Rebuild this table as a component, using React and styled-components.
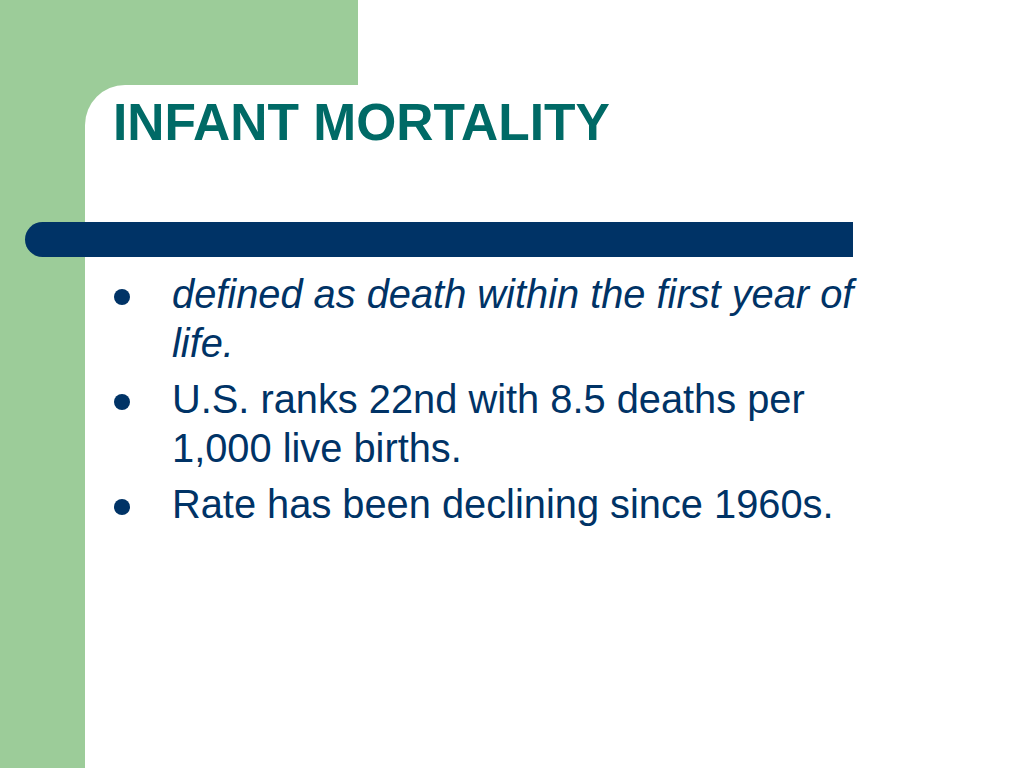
import React from 'react';
import styled, { createGlobalStyle } from 'styled-components';

const GlobalStyle = createGlobalStyle`
  html, body {
    margin: 0;
    padding: 0;
    background: #ffffff;
  }
  body {
    font-family: "Liberation Sans", Arial, sans-serif;
  }
`;

const GREEN = '#9ccc99';
const NAVY = '#003366';
const TEAL = '#006a66';

const Slide = styled.div`
  width: 1024px;
  height: 768px;
  display: flex;
  flex-direction: column;
  overflow: hidden;
  background: #ffffff;
`;

const Header = styled.div`
  height: 85px;
  flex: none;
  display: flex;
`;

const TopBlock = styled.div`
  width: 358px;
  background: ${GREEN};
`;

const Body = styled.div`
  flex: 1;
  display: flex;
  background: ${GREEN};
`;

const Sidebar = styled.div`
  width: 85px;
  flex: none;
`;

const Panel = styled.div`
  flex: 1;
  background: #ffffff;
  border-top-left-radius: 40px;
  padding: 12px 0 0 26px;
  display: flex;
  flex-direction: column;
`;

const Title = styled.h1`
  margin: 0 0 0 2px;
  font-size: 51.5px;
  line-height: 51px;
  font-weight: bold;
  color: ${TEAL};
`;

const Bar = styled.div`
  margin: 74px 0 0 -86px;
  width: 828px;
  height: 35px;
  background: ${NAVY};
  border-radius: 18px 0 0 18px;
`;

const List = styled.ul`
  list-style: none;
  margin: 13px 0 0 0;
  padding: 0;
  width: 770px;
  display: flex;
  flex-direction: column;
  gap: 7px;
`;

const Item = styled.li`
  display: grid;
  grid-template-columns: 61px 1fr;
  font-size: 39.8px;
  line-height: 49px;
  color: ${NAVY};
  font-style: ${(p) => (p.$italic ? 'italic' : 'normal')};
`;

const Dot = styled.span`
  width: 16px;
  height: 16px;
  margin: 19px 0 0 3px;
  border-radius: 50%;
  background: ${NAVY};
`;

const items = [
  { text: 'defined as death within the first year of life.', italic: true },
  { text: 'U.S. ranks 22nd with 8.5 deaths per 1,000 live births.' },
  { text: 'Rate has been declining since 1960s.' },
];

export default function App() {
  return (
    <>
      <GlobalStyle />
      <Slide>
        <Header>
          <TopBlock />
        </Header>
        <Body>
          <Sidebar />
          <Panel>
            <Title>INFANT MORTALITY</Title>
            <Bar />
            <List>
              {items.map((it) => (
                <Item key={it.text} $italic={it.italic}>
                  <Dot />
                  <span>{it.text}</span>
                </Item>
              ))}
            </List>
          </Panel>
        </Body>
      </Slide>
    </>
  );
}
